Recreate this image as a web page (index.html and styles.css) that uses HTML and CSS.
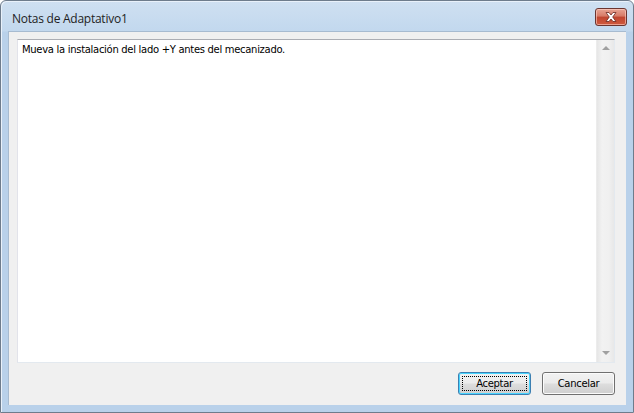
FILE: index.html
```html
<!DOCTYPE html>
<html>
<head>
<meta charset="utf-8">
<link rel="stylesheet" href="styles.css">
</head>
<body>
<div class="window">
  <div class="titlebar">
    <div class="title">Notas de Adaptativo1</div>
    <div class="close">
      <svg width="18" height="12" viewBox="0 0 18 12">
        <path d="M4 1.5 L7 1.5 L9 4 L11 1.5 L14 1.5 L10.7 6 L14 10.5 L11 10.5 L9 8 L7 10.5 L4 10.5 L7.3 6 Z" fill="#fff" stroke="#6a2a22" stroke-width="0.8" stroke-linejoin="round"/>
      </svg>
    </div>
  </div>
  <div class="client">
    <div class="editbox">
      <div class="text">Mueva la instalación del lado +Y antes del mecanizado.</div>
      <div class="scrollbar">
        <div class="arrow up"></div>
        <div class="arrow down"></div>
      </div>
    </div>
    <div class="buttons">
      <div class="btn default"><span class="focus">Aceptar</span></div>
      <div class="btn">Cancelar</div>
    </div>
  </div>
</div>
</body>
</html>
```
FILE: styles.css
```css
html, body {
  margin: 0;
  padding: 0;
  background: #ffffff;
}
.window {
  width: 634px;
  height: 413px;
  box-sizing: border-box;
  border: 1px solid #6e7c8c;
  border-radius: 6px 6px 0 0;
  background: linear-gradient(to bottom, #cfe0f1 0px, #c2d8ee 30px, #b9d1ea 31px, #b9d1ea 100%);
  display: flex;
  flex-direction: column;
  overflow: hidden;
  box-shadow: inset 1px 1px 0 #e9f1fa;
}
.titlebar {
  height: 30px;
  display: flex;
  align-items: flex-start;
  justify-content: space-between;
  padding: 0 6px 0 11px;
}
.title {
  font-family: "Open Sans", "Noto Sans", sans-serif;
  font-size: 12px;
  color: #1e1e1e;
  margin-top: 9px;
  letter-spacing: -0.25px;
}
.close {
  width: 32px;
  height: 18px;
  margin-top: 7px;
  box-sizing: border-box;
  border: 1px solid #6b3530;
  border-radius: 3px;
  background: linear-gradient(to bottom, #e8a493 0%, #d67a66 45%, #c0452f 50%, #cf5a3f 100%);
  box-shadow: inset 0 0 0 1px rgba(255,210,200,0.6);
  display: flex;
  align-items: center;
  justify-content: center;
}
.close svg { display: block; }
.client {
  flex: 1;
  margin: 0 7px 7px 7px;
  background: #f0f0f0;
  display: flex;
  flex-direction: column;
  padding: 7px 11px 10px 8px;
  border-top: 1px solid #a7bbd0;
  border-left: 1px solid #a7bbd0;
}
.editbox {
  flex: 1;
  background: #fff;
  border: 1px solid #abadb3;
  border-color: #abadb3 #e3e9ef #e3e9ef #e2e3ea;
  display: flex;
}
.text {
  flex: 1;
  font-family: "DejaVu Sans", sans-serif;
  font-size: 10px;
  color: #000;
  padding: 4px 0 0 4px;
  letter-spacing: -0.3px;
}
.scrollbar {
  width: 17px;
  background: linear-gradient(to right, #e6e6e6, #f2f2f2 30%, #f0f0f0 70%, #e8e8e8);
  border-left: 1px solid #ececec;
  display: flex;
  flex-direction: column;
  justify-content: space-between;
  align-items: center;
  padding: 6px 0 7px 0;
}
.arrow {
  width: 0;
  height: 0;
  border-left: 4px solid transparent;
  border-right: 4px solid transparent;
}
.arrow.up { border-bottom: 4px solid #a0a0a0; }
.arrow.down { border-top: 4px solid #a0a0a0; }
.buttons {
  display: flex;
  justify-content: flex-end;
  gap: 11px;
  margin-top: 9px;
}
.btn {
  width: 73px;
  height: 23px;
  box-sizing: border-box;
  border: 1px solid #707070;
  border-radius: 3px;
  background: linear-gradient(to bottom, #f2f2f2 0%, #ebebeb 48%, #dddddd 52%, #cfcfcf 100%);
  box-shadow: inset 0 0 0 1px #fbfbfb;
  font-family: "DejaVu Sans", sans-serif;
  font-size: 10px;
  letter-spacing: -0.3px;
  color: #000;
  display: flex;
  align-items: center;
  justify-content: center;
}
.btn.default {
  border-color: #3c7fb1;
  box-shadow: inset 0 0 0 1px #48d5ff;
  position: relative;
}
.btn.default .focus::before {
  content: "";
  position: absolute;
  left: 3px;
  top: 3px;
  right: 3px;
  bottom: 3px;
  border: 1px dotted #000;
}
```
